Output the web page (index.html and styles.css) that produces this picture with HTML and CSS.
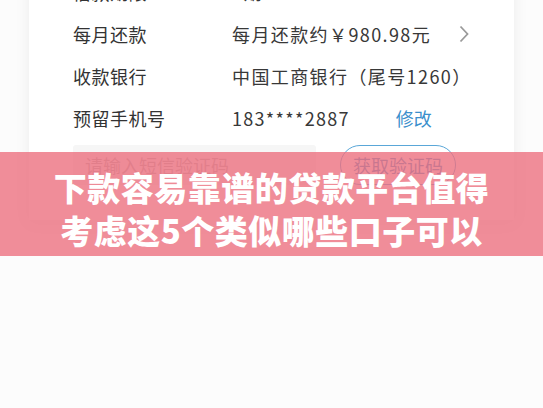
FILE: index.html
```html
<!doctype html>
<html lang="zh-CN">
  <head>
    <meta charset="utf-8" />
    <title>借款确认</title>
    <link rel="stylesheet" href="styles.css">
  </head>
  <body>
    <div class="page">
      <div class="card">
        <div class="row">
          <span class="label">借款期限</span>
          <span class="value">6期</span>
        </div>
        <div class="row">
          <span class="label">每月还款</span>
          <span class="value">每月还款约￥980.98元</span>
          <svg class="arrow" width="10" height="18" viewBox="0 0 10 18">
            <polyline points="1.5,1.5 8.5,9 1.5,16.5" fill="none" stroke="#9a9a9a" stroke-width="1.8" />
          </svg>
        </div>
        <div class="row">
          <span class="label">收款银行</span>
          <span class="value">中国工商银行（尾号1260）</span>
        </div>
        <div class="row">
          <span class="label">预留手机号</span>
          <span class="phone">183****2887</span>
          <a class="edit" href="#">修改</a>
        </div>
        <div class="verify">
          <div class="codeInput">请输入短信验证码</div>
          <button class="codeBtn">获取验证码</button>
        </div>
      </div>

      <!-- title banner over the screenshot -->
      <div class="banner">
        下款容易靠谱的贷款平台值得<br />考虑这5个类似哪些口子可以
      </div>
    </div>
  </body>
</html>
```

FILE: styles.css
```css
* {
  box-sizing: border-box;
}
body {
  margin: 0;
  background: #fcfcfc;
  font-family: "Noto Sans CJK SC", "Noto Sans", sans-serif;
  color: #333;
}
.page {
  position: relative;
  height: 408px;
  overflow: hidden;
}
.card {
  margin: -29px 29px 0;
  padding: 0 44px 35px;
  background: #fff;
  box-shadow: 0 2px 14px rgba(0, 0, 0, 0.07);
}
.row {
  display: flex;
  align-items: center;
  height: 42px;
  font-size: 18px;
}
.row .label {
  width: 159px;
  color: #333;
  letter-spacing: 0.5px;
}
.row .value {
  flex: 1;
  color: #383838;
  letter-spacing: 1.4px;
}
.row .phone {
  color: #383838;
  letter-spacing: 1.3px;
}
.row .edit {
  margin-left: 46px;
  color: #3b8fcc;
  text-decoration: none;
}
.arrow {
  margin-right: 1px;
}
.verify {
  display: flex;
  align-items: center;
  margin-top: 6px;
}
.codeInput {
  width: 243px;
  height: 40px;
  line-height: 40px;
  padding-left: 12px;
  background: #f6f6f6;
  border-radius: 3px;
  color: #b5b5b5;
  font-size: 18px;
}
.codeBtn {
  margin-left: 24px;
  width: 116px;
  height: 40px;
  border: 1px solid #5aa7d8;
  border-radius: 20px;
  background: #fff;
  color: #3b8fcc;
  font-family: inherit;
  font-size: 18px;
  padding: 0;
}
.banner {
  position: absolute;
  left: 0;
  top: 152px;
  width: 100%;
  height: 104px;
  padding-top: 14px;
  background: rgba(236, 112, 128, 0.8);
  color: #fff;
  font-size: 33px;
  font-weight: 900;
  line-height: 43px;
  text-align: center;
  letter-spacing: 0.5px;
}
```
